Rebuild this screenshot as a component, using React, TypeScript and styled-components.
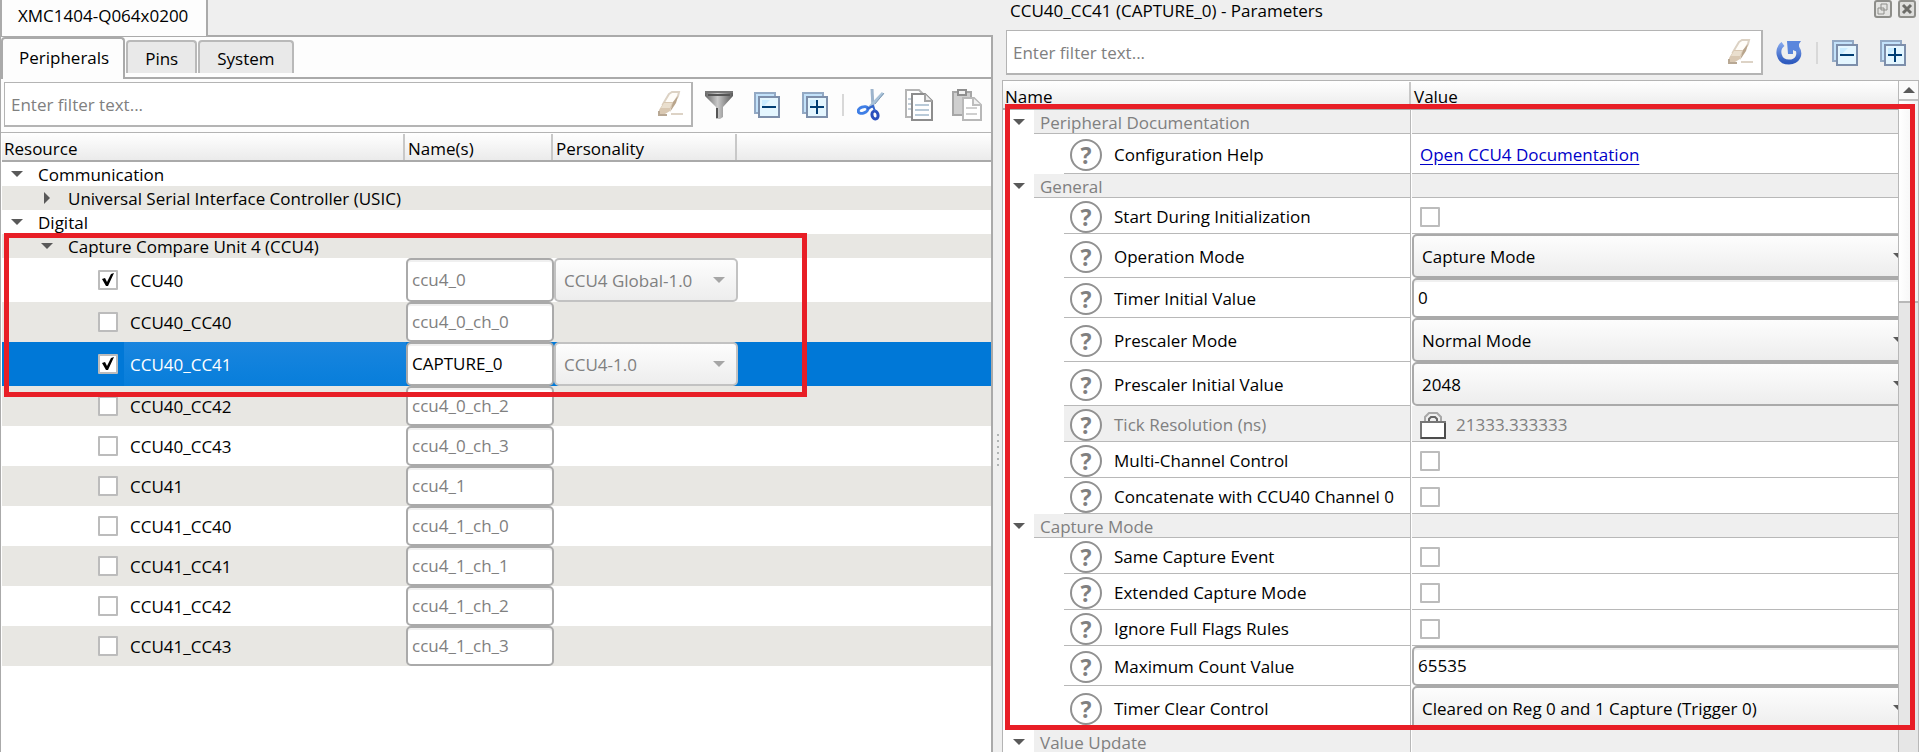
import React from "react";
import styled, { createGlobalStyle, css } from "styled-components";

const FONT = '"Open Sans", "Noto Sans", sans-serif';
const LINE = "#aaaaaa";
const MUTED = "#808080";

const GlobalStyle = createGlobalStyle`
  *, *::before, *::after { box-sizing: border-box; }
  body { margin: 0; background: #efefef; color: #000; font: 17px/24px ${FONT}; }
  button, input, select { font: inherit; color: inherit; margin: 0; }
`;

const Shell = styled.main`
  display: grid;
  grid-template-columns: minmax(0, 993fr) 9px minmax(0, 917fr);
  height: 100vh;
  overflow: hidden;
`;

const Pane = styled.section`
  display: flex;
  flex-direction: column;
  min-width: 0;
  min-height: 0;
`;

const Splitter = styled.div`
  display: flex;
  align-items: center;
  justify-content: center;
  padding-top: 148px;
  &::after {
    content: "";
    width: 2px;
    height: 32px;
    background: repeating-linear-gradient(#b0b4b4 0 2px, #efefef 2px 6px);
  }
`;

/* ---- tabs ---- */

const DeviceTabs = styled.div`
  display: flex;
  height: 37px;
  flex: none;
  border-bottom: 2px solid ${LINE};
`;

const DeviceTab = styled.button`
  height: 36px;
  padding: 0 18px 4px 16px;
  border: solid ${LINE};
  border-width: 0 2px;
  background: #fdfdfd;
`;

const PaneBody = styled.div`
  display: flex;
  flex-direction: column;
  flex: 1;
  min-height: 0;
  background: #fdfdfd;
  border: solid ${LINE};
  border-width: 0 2px 0 1px;
`;

const ViewTabs = styled.div`
  display: flex;
  align-items: flex-start;
  gap: 1px;
  height: 42px;
  flex: none;
  border-bottom: 2px solid ${LINE};
`;

const ViewTab = styled.button<{ $active?: boolean }>`
  padding: 2px 17px 0;
  border: 2px solid #b9b9b9;
  border-bottom: 0;
  border-radius: 4px 4px 0 0;
  height: 33px;
  margin-top: 3px;
  background: #e9e9e9;
  ${(p) =>
    p.$active &&
    css`
      height: 42px;
      margin-top: 0;
      border-color: ${LINE};
      padding: 0 14px 2px 16px;
      background: #fdfdfd;
    `}
`;

/* ---- toolbar ---- */

const Toolbar = styled.div<{ $inset?: boolean }>`
  display: flex;
  align-items: center;
  flex: none;
  padding: ${(p) => (p.$inset ? "3px 2px 5px 4px" : "3px 0 5px 3px")};
`;

const FilterBox = styled.div`
  display: flex;
  align-items: center;
  flex: 1;
  min-width: 0;
  height: 45px;
  margin-right: 2px;
  background: #fff;
  border: solid #b4b4b4;
  border-width: 1px 2px 2px 1px;
`;

const FilterInput = styled.input`
  flex: 1;
  min-width: 0;
  height: 100%;
  padding: 0 6px;
  border: 0;
  background: none;
  outline: 0;
  &::placeholder { color: ${MUTED}; opacity: 1; }
`;

const PlainButton = styled.button`
  display: grid;
  place-items: center;
  padding: 0;
  border: 0;
  background: none;
`;

const EraseButton = styled(PlainButton)`
  width: 40px;
  height: 40px;
`;

const ToolButton = styled(PlainButton)`
  width: 48px;
  height: 40px;
`;

const ToolDivider = styled.span`
  flex: none;
  width: 2px;
  height: 22px;
  margin: 0 3px;
  background: #d8d8d8;
`;

/* ---- tables ---- */

const Tree = styled.div<{ $edge?: boolean }>`
  position: relative;
  display: flex;
  flex: 1;
  min-height: 0;
  padding-left: ${(p) => (p.$edge ? 0 : 1)}px;
  background: #fff;
  border: solid #b4b4b4;
  border-width: ${(p) => (p.$edge ? "1px 0 0 1px" : "1px 0 0")};
`;

const TableArea = styled.div`
  flex: 1;
  min-width: 0;
`;

const Table = styled.table`
  width: 100%;
  table-layout: fixed;
  border-collapse: collapse;
  td, th { padding: 0; }
`;

const HeadCell = styled.th`
  height: 28px;
  text-align: left;
  font-weight: 400;
  background: linear-gradient(#ffffff, #ebebeb);
  border-bottom: 2px solid ${LINE};
`;

const HeadLabel = styled.div<{ $divided?: boolean }>`
  height: 26px;
  padding: 2px 0 0 2px;
  margin-right: 1px;
  line-height: 26px;
  border-right: ${(p) => (p.$divided ? "2px solid #c8c8c8" : "0")};
`;

const ResourceTr = styled.tr<{ $height: number; $selected?: boolean }>`
  height: ${(p) => p.$height}px;
  &:nth-child(even) { background: #e8e7e3; }
  ${(p) =>
    p.$selected &&
    css`
      && { background: #0078d7; }
    `}
`;

const ResourceCell = styled.div<{ $level: number }>`
  display: flex;
  align-items: center;
  padding-left: ${(p) => p.$level * 30}px;
`;

const TreeToggle = styled(PlainButton)`
  width: 30px;
  height: 24px;
`;

const TreeText = styled.span`
  height: 24px;
  padding: 1px 0 0 6px;
  white-space: nowrap;
`;

const ItemLabel = styled.label<{ $selected?: boolean; $height: number }>`
  display: flex;
  flex: 1;
  align-items: center;
  height: ${(p) => p.$height}px;
  padding: 1px 0 0 6px;
  ${(p) =>
    p.$selected &&
    css`
      color: #fff;
      background: linear-gradient(#1a85de, #077edb);
    `}
`;

const CheckWrap = styled.span`
  display: inline-grid;
  place-items: center;
  > * { grid-area: 1 / 1; }
  svg { pointer-events: none; }
`;

const CheckInput = styled.input`
  appearance: none;
  width: 20px;
  height: 20px;
  border: 2px solid #bcbcbc;
  border-radius: 1px;
  background: #fff;
`;

const TreeCheck = styled(CheckWrap)`
  margin: 0 6px 0 36px;
`;

const TextField = styled.input<{ $height: number }>`
  display: block;
  width: 100%;
  height: ${(p) => p.$height}px;
  padding: 0 4px 1px;
  color: #000;
  background: #fff;
  border: 2px solid ${LINE};
  border-radius: 5px;
  box-shadow: inset 0 2px 0 #f0f0f0;
  outline: 0;
  &:disabled { color: ${MUTED}; }
`;

const SelectWrap = styled.span`
  display: grid;
  align-items: center;
  > * { grid-area: 1 / 1; }
  svg { justify-self: end; margin-right: 13px; pointer-events: none; }
`;

const SelectField = styled.select<{ $height: number }>`
  appearance: none;
  width: 100%;
  height: ${(p) => p.$height}px;
  padding: 1px 8px 0;
  color: #000;
  background: linear-gradient(#fdfdfd, #ededed);
  border: 2px solid ${LINE};
  border-radius: 5px;
  outline: 0;
  &:disabled { color: ${MUTED}; border-color: #c2c2c2; opacity: 1; }
`;

/* ---- parameters pane ---- */

const TitleBar = styled.header`
  display: flex;
  align-items: flex-start;
  justify-content: space-between;
  flex: none;
  height: 27px;
  padding: 0 3px 0 8px;
`;

const PaneTitle = styled.h1`
  margin: 0;
  font: inherit;
  line-height: 22px;
`;

const WindowButtons = styled.div`
  display: flex;
  gap: 6px;
`;

const ParamTr = styled.tr<{ $height: number }>`
  height: ${(p) => p.$height}px;
`;

const Cell = styled.div<{ $height: number; $shade?: boolean; $muted?: boolean }>`
  display: flex;
  align-items: center;
  height: ${(p) => p.$height}px;
  border-bottom: 1px solid #b8b8b8;
  background: ${(p) => (p.$shade ? "#efefef" : "#fff")};
  color: ${(p) => (p.$muted ? MUTED : "#000")};
`;

const CategoryName = styled.div`
  display: flex;
  align-items: center;
  padding-left: 1px;
`;

const CategoryLabel = styled(Cell)`
  flex: 1;
  padding: 2px 0 0 6px;
  margin-right: 1px;
  border-right: 1px solid #b8b8b8;
`;

const ParamName = styled(Cell)`
  gap: 12px;
  margin: 0 1px 0 61px;
  padding: 2px 0 0 6px;
  border-right: 1px solid #b8b8b8;
  white-space: nowrap;
`;

const HelpButton = styled.button`
  flex: none;
  width: 32px;
  height: 32px;
  padding: 0;
  border: 2px solid #919191;
  border-radius: 50%;
  background: #fff;
  color: ${MUTED};
  font: 700 23px/26px "Noto Sans", sans-serif;
`;

const ValueCell = styled(Cell)`
  padding: 2px 0 0 8px;
  gap: 10px;
`;

const EditorCell = styled.div<{ $height: number }>`
  height: ${(p) => p.$height}px;
  overflow: hidden;
  > * { width: calc(100% + 20px); }
`;

const DocLink = styled.a`
  color: #0000c8;
  text-underline-offset: 3px;
`;

const Scrollbar = styled.div`
  display: flex;
  flex-direction: column;
  flex: none;
  width: 21px;
  border: solid #b8b8b8;
  border-width: 0 1px;
  background: #e6e6e6;
`;

const ScrollUp = styled(PlainButton)`
  height: 20px;
  background: #fafafa;
  border-bottom: 2px solid #c0c0c0;
`;

const ScrollThumb = styled.div`
  height: 202px;
  background: linear-gradient(90deg, #ffffff, #f2f2f2);
  border-bottom: 2px solid #b8b8b8;
`;

const Highlight = styled.div`
  position: absolute;
  border: 5px solid #e81e26;
  pointer-events: none;
`;

const ResourceHighlight = styled(Highlight)`
  top: 100px;
  left: 3px;
  width: 803px;
  height: 164px;
`;

const ParamHighlight = styled(Highlight)`
  top: 23px;
  left: 2px;
  right: 4px;
  height: 626px;
`;

/* ---- icons ---- */

const Caret = ({ dir = "down", color = "#595959" }: { dir?: "down" | "right" | "up"; color?: string }) => {
  const shapes = { down: "M0 3h12L6 9z", right: "M3 0v12l6-6z", up: "M0 9h12L6 3z" };
  return (
    <svg width="12" height="12" viewBox="0 0 12 12" aria-hidden="true">
      <path d={shapes[dir]} fill={color} />
    </svg>
  );
};

const CheckMark = () => (
  <svg width="12" height="14" viewBox="0 0 12 14" aria-hidden="true">
    <path d="M0 6l3-1 2 4 4-8 3-1-6 13H4z" fill="#000" />
  </svg>
);

const Eraser = () => (
  <svg width="26" height="26" viewBox="0 0 26 26" aria-hidden="true">
    <path d="M11 3l3-2h7l-1 4-6 10-9-2z" fill="#fffdf9" stroke="#dcd2c4" strokeWidth="2" />
    <path d="M6 11h9l-3 9-5 3H1v-4z" fill="#d9c8b2" />
    <path d="M15 11l5-6-2 7-6 9z" fill="#b9a58c" />
    <path d="M6 12h8l-2 5H3z" fill="#eadfce" />
    <path d="M13 23h12" stroke="#ddd3c6" strokeWidth="2" />
    <path d="M1 20v4h8" stroke="#b8a894" strokeWidth="2" fill="none" />
  </svg>
);

const Funnel = () => (
  <svg width="28" height="28" viewBox="0 0 28 28" aria-hidden="true">
    <defs>
      <linearGradient id="funnel" x1="0" x2="1">
        <stop offset="0" stopColor="#666" />
        <stop offset=".45" stopColor="#c9c9c9" />
        <stop offset="1" stopColor="#5a5a5a" />
      </linearGradient>
    </defs>
    <path d="M0 0h28v5L18 16v10l-3 2h-4V16L0 5z" fill="url(#funnel)" />
    <path d="M0 1h28" stroke="#777" strokeWidth="2" />
    <path d="M3 4h22" stroke="#555" strokeWidth="2" />
    <path d="M12 17v10" stroke="#555" strokeWidth="2" />
  </svg>
);

const Layers = ({ plus }: { plus?: boolean }) => (
  <svg width="26" height="26" viewBox="0 0 26 26" aria-hidden="true">
    <path d="M1 1h20v20H1z" fill="#c3e2fa" stroke="#93a9c4" strokeWidth="2" />
    <path d="M5 5h20v20H5z" fill="#e4f6ff" stroke="#7d8fab" strokeWidth="2" />
    <path d="M8 8h8l-8 8z" fill="#c9ebff" />
    <path d={plus ? "M8 15h14M15 8v14" : "M8 15h14"} stroke="#003d73" strokeWidth="2" />
  </svg>
);

const Scissors = () => (
  <svg width="28" height="32" viewBox="0 0 28 32" fill="none" aria-hidden="true">
    <path d="M15 0l1 19" stroke="#9db4cc" strokeWidth="3" />
    <path d="M26 4L11 20" stroke="#a9c2d8" strokeWidth="3" />
    <path d="M27 4l-9 11" stroke="#7f9ab5" strokeWidth="1" />
    <ellipse cx="6" cy="21" rx="5" ry="3" transform="rotate(-20 6 21)" stroke="#3f7fe6" strokeWidth="3" />
    <ellipse cx="18" cy="26" rx="3" ry="4" transform="rotate(-15 18 26)" stroke="#2a4fbd" strokeWidth="3" />
    <path d="M10 20l6-3 2 5" stroke="#3566cc" strokeWidth="2" />
  </svg>
);

const Copy = () => (
  <svg width="28" height="32" viewBox="0 0 28 32" fill="#fff" aria-hidden="true">
    <path d="M1 1h13l5 5v22H1z" stroke="#b5b5b5" strokeWidth="2" />
    <path d="M3 10h4M3 15h4M3 20h4" stroke="#c5d0da" strokeWidth="2" />
    <path d="M7 5h13l7 7v19H7z" stroke="#8d8d8d" strokeWidth="2" />
    <path d="M20 5v7h7" stroke="#a5a5a5" strokeWidth="2" fill="#eee" />
    <path d="M10 16h14M10 21h14M10 26h14" stroke="#b9cad8" strokeWidth="2" />
  </svg>
);

const Paste = () => (
  <svg width="30" height="32" viewBox="0 0 30 32" aria-hidden="true">
    <path d="M1 3h18v23H1z" fill="#cfcfcf" stroke="#a6a6a6" strokeWidth="2" />
    <path d="M6 1h8v5H6z" fill="#f2f2f2" stroke="#8f8f8f" strokeWidth="2" />
    <path d="M11 9h11l7 7v15H11z" fill="#fff" stroke="#b8b8b8" strokeWidth="2" />
    <path d="M21 9v7h8" fill="#f2f2f2" stroke="#bdbdbd" strokeWidth="2" />
    <path d="M14 19h11M14 25h11" stroke="#cfcfcf" strokeWidth="2" />
  </svg>
);

const Reset = () => (
  <svg width="26" height="26" viewBox="0 0 26 26" fill="none" aria-hidden="true">
    <defs>
      <linearGradient id="reset" x1="0" y1="0" x2="0" y2="1">
        <stop offset="0" stopColor="#7fa3ea" />
        <stop offset="1" stopColor="#2f5bbf" />
      </linearGradient>
    </defs>
    <path d="M7 4C0 9 2 22 13 22c9 0 12-8 8-14" stroke="url(#reset)" strokeWidth="5" />
    <path d="M11 1h14l-2 3v7h-4l-2-1v4h-5z" fill="#5a86dd" />
  </svg>
);

const FloatIcon = () => (
  <svg width="18" height="18" viewBox="0 0 18 18" fill="none" aria-hidden="true">
    <rect x="1" y="1" width="16" height="16" rx="2" fill="#e4e4e2" stroke="#8e8e8a" strokeWidth="2" />
    <path d="M7 4h6v6H7zM4 8h6v6H4z" fill="#e4e4e2" stroke="#8e8e8a" strokeWidth="1" />
  </svg>
);

const CloseIcon = () => (
  <svg width="18" height="18" viewBox="0 0 18 18" fill="none" aria-hidden="true">
    <rect x="1" y="1" width="16" height="16" rx="2" fill="#dededc" stroke="#8e8e8a" strokeWidth="2" />
    <path d="M5 5l8 8M13 5l-8 8" stroke="#6c6c68" strokeWidth="3" />
  </svg>
);

const Lock = () => (
  <svg width="26" height="28" viewBox="0 0 26 28" fill="none" aria-hidden="true">
    <path d="M5 11V6l4-4h8l4 4v5" stroke="#a8a8a8" strokeWidth="2" />
    <path d="M9 11V8l2-2h4l2 2v3" stroke="#666" strokeWidth="2" />
    <path d="M1 11h24v16H1z" fill="#fff" stroke="#777" strokeWidth="2" />
    <path d="M1 27h24V12" stroke="#4d4d4d" strokeWidth="2" />
  </svg>
);

/* ---- composed parts ---- */

const Filter = ({ label }: { label: string }) => (
  <FilterBox>
    <FilterInput aria-label={label} placeholder="Enter filter text..." />
    <EraseButton aria-label="Clear filter">
      <Eraser />
    </EraseButton>
  </FilterBox>
);

const Check = ({ id, checked }: { id: string; checked?: boolean }) => (
  <>
    <CheckInput type="checkbox" id={id} defaultChecked={checked} />
    {checked && <CheckMark />}
  </>
);

const Select = ({ label, value, height, disabled }: { label: string; value: string; height: number; disabled?: boolean }) => (
  <SelectWrap>
    <SelectField aria-label={label} $height={height} disabled={disabled} defaultValue={value}>
      <option>{value}</option>
    </SelectField>
    <Caret color={disabled ? "#a6a6a6" : "#595959"} />
  </SelectWrap>
);

type Resource = { id: string; name: string; checked?: boolean; personality?: string; selected?: boolean };

const resources: Resource[] = [
  { id: "CCU40", name: "ccu4_0", checked: true, personality: "CCU4 Global-1.0" },
  { id: "CCU40_CC40", name: "ccu4_0_ch_0" },
  { id: "CCU40_CC41", name: "CAPTURE_0", checked: true, personality: "CCU4-1.0", selected: true },
  { id: "CCU40_CC42", name: "ccu4_0_ch_2" },
  { id: "CCU40_CC43", name: "ccu4_0_ch_3" },
  { id: "CCU41", name: "ccu4_1" },
  { id: "CCU41_CC40", name: "ccu4_1_ch_0" },
  { id: "CCU41_CC41", name: "ccu4_1_ch_1" },
  { id: "CCU41_CC42", name: "ccu4_1_ch_2" },
  { id: "CCU41_CC43", name: "ccu4_1_ch_3" },
];

const Group = ({ text, level, open = true }: { text: string; level: number; open?: boolean }) => (
  <ResourceTr $height={24}>
    <td colSpan={4}>
      <ResourceCell $level={level}>
        <TreeToggle aria-label={`Toggle ${text}`}>
          <Caret dir={open ? "down" : "right"} />
        </TreeToggle>
        <TreeText>{text}</TreeText>
      </ResourceCell>
    </td>
  </ResourceTr>
);

const ResourceRow = ({ item }: { item: Resource }) => {
  const height = item.personality ? 44 : 40;
  return (
    <ResourceTr $height={height} $selected={item.selected}>
      <td>
        <ResourceCell $level={2}>
          <TreeCheck>
            <Check id={item.id} checked={item.checked} />
          </TreeCheck>
          <ItemLabel htmlFor={item.id} $selected={item.selected} $height={height}>
            {item.id}
          </ItemLabel>
        </ResourceCell>
      </td>
      <td>
        <TextField
          $height={height}
          aria-label={`${item.id} name`}
          defaultValue={item.name}
          disabled={!item.selected}
        />
      </td>
      <td>
        {item.personality && (
          <Select label={`${item.id} personality`} value={item.personality} height={height} disabled />
        )}
      </td>
      <td />
    </ResourceTr>
  );
};

type Param = {
  kind: "category" | "link" | "check" | "text" | "select" | "locked";
  name: string;
  value?: string;
};

const params: Param[] = [
  { kind: "category", name: "Peripheral Documentation" },
  { kind: "link", name: "Configuration Help", value: "Open CCU4 Documentation" },
  { kind: "category", name: "General" },
  { kind: "check", name: "Start During Initialization" },
  { kind: "select", name: "Operation Mode", value: "Capture Mode" },
  { kind: "text", name: "Timer Initial Value", value: "0" },
  { kind: "select", name: "Prescaler Mode", value: "Normal Mode" },
  { kind: "select", name: "Prescaler Initial Value", value: "2048" },
  { kind: "locked", name: "Tick Resolution (ns)", value: "21333.333333" },
  { kind: "check", name: "Multi-Channel Control" },
  { kind: "check", name: "Concatenate with CCU40 Channel 0" },
  { kind: "category", name: "Capture Mode" },
  { kind: "check", name: "Same Capture Event" },
  { kind: "check", name: "Extended Capture Mode" },
  { kind: "check", name: "Ignore Full Flags Rules" },
  { kind: "text", name: "Maximum Count Value", value: "65535" },
  { kind: "select", name: "Timer Clear Control", value: "Cleared on Reg 0 and 1 Capture (Trigger 0)" },
  { kind: "category", name: "Value Update" },
];

const rowHeights = { category: 24, link: 40, check: 36, text: 40, select: 44, locked: 36 };

const ParamRow = ({ param }: { param: Param }) => {
  const { kind, name, value = "" } = param;
  const height = rowHeights[kind];
  const id = name.toLowerCase().replace(/[^a-z0-9]+/g, "-");

  if (kind === "category") {
    return (
      <ParamTr $height={height}>
        <td>
          <CategoryName>
            <TreeToggle aria-label={`Toggle ${name}`}>
              <Caret />
            </TreeToggle>
            <CategoryLabel $height={height} $shade $muted>
              {name}
            </CategoryLabel>
          </CategoryName>
        </td>
        <td>
          <Cell $height={height} $shade />
        </td>
      </ParamTr>
    );
  }

  const locked = kind === "locked";
  return (
    <ParamTr $height={height}>
      <td>
        <ParamName $height={height} $shade={locked} $muted={locked}>
          <HelpButton aria-label={`Help for ${name}`}>?</HelpButton>
          {kind === "check" ? <label htmlFor={id}>{name}</label> : <span>{name}</span>}
        </ParamName>
      </td>
      <td>
        {kind === "select" && (
          <EditorCell $height={height}>
            <Select label={name} value={value} height={height} />
          </EditorCell>
        )}
        {kind === "text" && (
          <EditorCell $height={height}>
            <TextField aria-label={name} defaultValue={value} $height={height} />
          </EditorCell>
        )}
        {kind === "link" && (
          <ValueCell $height={height}>
            <DocLink href="#documentation">{value}</DocLink>
          </ValueCell>
        )}
        {kind === "check" && (
          <ValueCell $height={height}>
            <CheckWrap>
              <Check id={id} />
            </CheckWrap>
          </ValueCell>
        )}
        {locked && (
          <ValueCell $height={height} $shade $muted>
            <Lock />
            <span>{value}</span>
          </ValueCell>
        )}
      </td>
    </ParamTr>
  );
};

export default function App() {
  return (
    <>
      <GlobalStyle />
      <Shell>
        <Pane>
          <DeviceTabs>
            <DeviceTab>XMC1404-Q064x0200</DeviceTab>
          </DeviceTabs>
          <PaneBody>
            <ViewTabs>
              <ViewTab $active>Peripherals</ViewTab>
              <ViewTab>Pins</ViewTab>
              <ViewTab>System</ViewTab>
            </ViewTabs>
            <Toolbar>
              <Filter label="Filter resources" />
              <ToolButton aria-label="Filter"><Funnel /></ToolButton>
              <ToolButton aria-label="Collapse all"><Layers /></ToolButton>
              <ToolButton aria-label="Expand all"><Layers plus /></ToolButton>
              <ToolDivider />
              <ToolButton aria-label="Cut"><Scissors /></ToolButton>
              <ToolButton aria-label="Copy"><Copy /></ToolButton>
              <ToolButton aria-label="Paste"><Paste /></ToolButton>
            </Toolbar>
            <Tree>
              <TableArea>
                <Table>
                  <colgroup>
                    <col width="404" />
                    <col width="148" />
                    <col width="184" />
                    <col />
                  </colgroup>
                  <thead>
                    <tr>
                      <HeadCell scope="col"><HeadLabel $divided>Resource</HeadLabel></HeadCell>
                      <HeadCell scope="col"><HeadLabel $divided>Name(s)</HeadLabel></HeadCell>
                      <HeadCell scope="col"><HeadLabel $divided>Personality</HeadLabel></HeadCell>
                      <HeadCell />
                    </tr>
                  </thead>
                  <tbody>
                    <Group text="Communication" level={0} />
                    <Group text="Universal Serial Interface Controller (USIC)" level={1} open={false} />
                    <Group text="Digital" level={0} />
                    <Group text="Capture Compare Unit 4 (CCU4)" level={1} />
                    {resources.map((item) => (
                      <ResourceRow key={item.id} item={item} />
                    ))}
                  </tbody>
                </Table>
              </TableArea>
              <ResourceHighlight />
            </Tree>
          </PaneBody>
        </Pane>

        <Splitter />

        <Pane>
          <TitleBar>
            <PaneTitle>CCU40_CC41 (CAPTURE_0) - Parameters</PaneTitle>
            <WindowButtons>
              <PlainButton aria-label="Float panel"><FloatIcon /></PlainButton>
              <PlainButton aria-label="Close panel"><CloseIcon /></PlainButton>
            </WindowButtons>
          </TitleBar>
          <Toolbar $inset>
            <Filter label="Filter parameters" />
            <ToolButton aria-label="Reset"><Reset /></ToolButton>
            <ToolDivider />
            <ToolButton aria-label="Collapse all"><Layers /></ToolButton>
            <ToolButton aria-label="Expand all"><Layers plus /></ToolButton>
          </Toolbar>
          <Tree $edge>
            <TableArea>
              <Table>
                <colgroup>
                  <col width="409" />
                  <col />
                </colgroup>
                <thead>
                  <tr>
                    <HeadCell scope="col"><HeadLabel $divided>Name</HeadLabel></HeadCell>
                    <HeadCell scope="col"><HeadLabel>Value</HeadLabel></HeadCell>
                  </tr>
                </thead>
                <tbody>
                  {params.map((param) => (
                    <ParamRow key={param.name + param.kind} param={param} />
                  ))}
                </tbody>
              </Table>
            </TableArea>
            <Scrollbar>
              <ScrollUp aria-label="Scroll up"><Caret dir="up" /></ScrollUp>
              <ScrollThumb />
            </Scrollbar>
            <ParamHighlight />
          </Tree>
        </Pane>
      </Shell>
    </>
  );
}
